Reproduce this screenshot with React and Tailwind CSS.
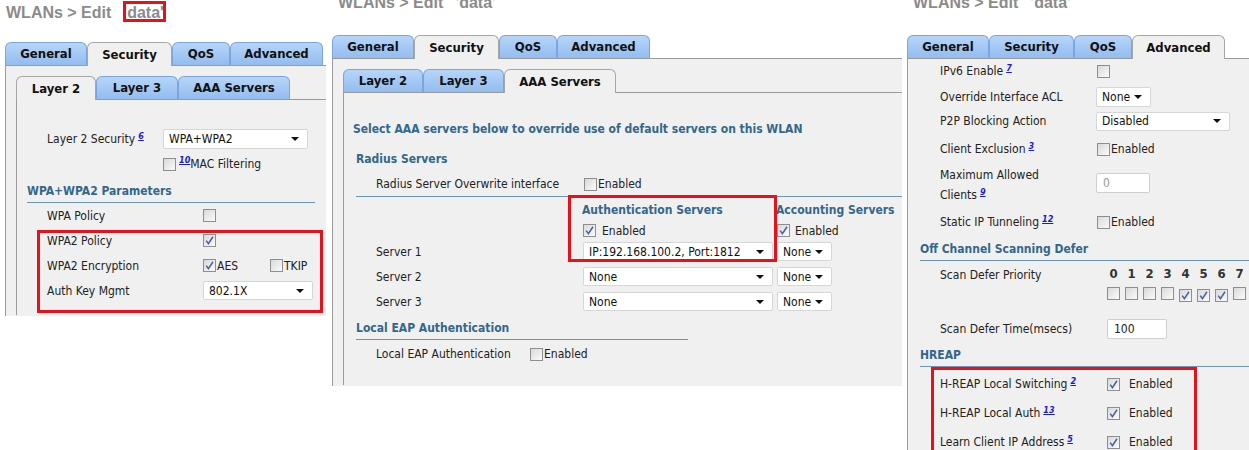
import React from 'react';

const FONT = { fontFamily: '"DejaVu Sans Condensed", "DejaVu Sans", sans-serif' };

const Box = ({ on }) => (
  <span className="inline-flex w-[13px] h-[13px] shrink-0 items-center justify-center border border-[#8e8e8e] bg-linear-to-br from-[#d9d9d9] to-[#fbfbfb]">
    {on && (
      <svg width="9" height="9" viewBox="0 0 9 9">
        <path d="M1.2 4.6 L3.4 7.6 L8 0.8" stroke="#4f62a3" strokeWidth="1.6" fill="none" />
      </svg>
    )}
  </span>
);

const Sel = ({ value, className }) => (
  <div className={`relative flex items-center bg-white border border-[#d6d6d6] rounded-[2px] pl-[5px] text-[12px] text-[#111] ${className}`}>
    <span className="whitespace-nowrap">{value}</span>
    <svg className="absolute right-[8px] top-1/2 -translate-y-1/2" width="8" height="4" viewBox="0 0 8 4">
      <path d="M0 0 H8 L4 4 Z" fill="#111" />
    </svg>
  </div>
);

const Field = ({ value, className }) => (
  <div className={`flex items-center bg-white border border-[#cfcfcf] rounded-[2px] pl-[6px] text-[12px] ${className}`}>{value}</div>
);

const Sup = ({ n }) => (
  <sup className="ml-[3px] text-[9px] font-bold italic text-[#1a1ad6] underline">{n}</sup>
);

const Title = ({ className = '' }) => (
  <div className="h-[42px] pl-[6px] text-[16px] font-bold text-[#8b8b8b] whitespace-nowrap" style={{ fontFamily: '"Liberation Sans", Arial, sans-serif' }}>
    <div className={`relative ${className}`}>
      WLANs &gt; Edit
      <span className="ml-[12px]">'data'</span>
    </div>
  </div>
);

function Tabs({ items, active }) {
  return (
    <div className="flex h-[24px]">
      {items.map(([label, w]) =>
        label === active ? (
          <div key={label} className={`${w} shrink-0 flex items-center justify-center rounded-t-[6px] border border-b-0 border-[#a6a6a6] bg-[#f0f0f0] text-[13px] font-bold text-[#111]`}>
            {label}
          </div>
        ) : (
          <div key={label} className={`${w} shrink-0 flex items-center justify-center rounded-t-[6px] border border-[#7ba5db] border-b-[#9a9a9a] bg-linear-to-b from-[#b7d5f9] to-[#93bcf0] text-[13px] font-bold text-[#111]`}>
            {label}
          </div>
        )
      )}
      <div className="flex-1 border-b border-[#9a9a9a]" />
    </div>
  );
}

const Head = ({ children, className }) => (
  <div className={`flex items-center h-[23px] border-b border-[#6b95b5] text-[12px] font-bold text-[#33678c] ${className}`}>{children}</div>
);

const Red = ({ className }) => <div className={`absolute border-[3px] border-[#e5121c] pointer-events-none ${className}`} />;

const top = [['General', 'w-[82px]'], ['Security', 'w-[85px]'], ['QoS', 'w-[58px]'], ['Advanced', 'w-[93px]']];
const inner1 = [['Layer 2', 'w-[80px]'], ['Layer 3', 'w-[82px]'], ['AAA Servers', 'w-[112px]']];
const inner2 = [['Layer 2', 'w-[80px]'], ['Layer 3', 'w-[81px]'], ['AAA Servers', 'w-[112px]']];

function PanelOne() {
  return (
    <div className="relative w-[331px] shrink-0">
      <Title className="top-[1px]" />
      <Red className="left-[123px] top-[1px] w-[43px] h-[21px]" />
      <div className="pl-[5px] pr-[5px]">
        <Tabs items={top} active="Security" />
        <div className="h-[250px] bg-[#f0f0f0] border-l border-[#9a9a9a] pt-[10px] pl-[10px]">
          <Tabs items={inner1} active="Layer 2" />
          <div className="relative h-[215px] overflow-hidden border-l border-[#9a9a9a] text-[12px] text-[#222]">
            <div className="h-[29px]" />
            <div className="flex items-center h-[20px] pl-[30px]">
              <div className="w-[116px]">Layer 2 Security<Sup n="6" /></div>
              <Sel value="WPA+WPA2" className="w-[145px] h-[20px]" />
            </div>
            <div className="flex items-center h-[20px] mt-[5px] pl-[146px]">
              <Box />
              <Sup n="10" />
              <span>MAC Filtering</span>
            </div>
            <Head className="mt-[6px] ml-[10px] w-[288px]">WPA+WPA2 Parameters</Head>
            <div className="flex items-center h-[25px] pl-[30px]">
              <div className="w-[156px]">WPA Policy</div>
              <Box />
            </div>
            <div className="flex items-center h-[25px] pl-[30px]">
              <div className="w-[156px]">WPA2 Policy</div>
              <Box on />
            </div>
            <div className="flex items-center h-[25px] pl-[30px]">
              <div className="w-[156px]">WPA2 Encryption</div>
              <div className="flex items-center w-[67px]"><Box on /><span className="ml-[1px]">AES</span></div>
              <Box /><span className="ml-[1px]">TKIP</span>
            </div>
            <div className="flex items-center h-[25px] pl-[30px]">
              <div className="w-[156px]">Auth Key Mgmt</div>
              <Sel value="802.1X" className="w-[110px] h-[19px]" />
            </div>
            <Red className="left-[20px] top-[130px] w-[286px] h-[83px]" />
          </div>
        </div>
      </div>
    </div>
  );
}

function PanelTwo() {
  return (
    <div className="relative w-[575px] shrink-0 -mt-[7px] pl-[1px]">
      <Title className="-top-[2px]" />
      <div className="w-[570px]">
        <Tabs items={top} active="Security" />
        <div className="h-[327px] bg-[#f0f0f0] border-l border-[#9a9a9a] pt-[10px] pl-[10px]">
          <Tabs items={inner2} active="AAA Servers" />
          <div className="relative h-[292px] border-l border-[#9a9a9a] text-[12px] text-[#222]">
            <div className="h-[26px]" />
            <div className="flex items-center h-[20px] pl-[9px] font-bold text-[#33678c]">
              Select AAA servers below to override use of default servers on this WLAN
            </div>
            <div className="flex items-center h-[20px] mt-[10px] pl-[12px] font-bold text-[#33678c]">Radius Servers</div>
            <div className="flex items-center h-[20px] mt-[5px] pl-[32px]">
              <div className="w-[208px]">Radius Server Overwrite interface</div>
              <Box /><span className="ml-[1px]">Enabled</span>
            </div>
            <div className="mt-[2px] ml-[12px] border-t border-[#6b95b5]" />
            <div className="flex items-center h-[20px] mt-[3px] pl-[238px] font-bold text-[#33678c] whitespace-nowrap">
              <div className="w-[194px]">Authentication Servers</div>
              <div>Accounting Servers</div>
            </div>
            <div className="flex items-center h-[21px] pl-[239px]">
              <div className="flex items-center w-[194px]"><Box on /><span className="ml-[6px]">Enabled</span></div>
              <Box on /><span className="ml-[5px]">Enabled</span>
            </div>
            {[
              ['Server 1', 'IP:192.168.100.2, Port:1812', ''],
              ['Server 2', 'None', 'mt-[4px]'],
              ['Server 3', 'None', 'mt-[4px]'],
            ].map(([l, v, m]) => (
              <div key={l} className={`flex items-center h-[21px] pl-[32px] ${m}`}>
                <div className="w-[207px]">{l}</div>
                <Sel value={v} className="w-[190px] h-[19px]" />
                <Sel value="None" className="w-[55px] h-[19px] ml-[4px]" />
              </div>
            ))}
            <Head className="mt-[5px] ml-[12px] w-[332px]">Local EAP Authentication</Head>
            <div className="flex items-center h-[20px] mt-[4px] pl-[32px]">
              <div className="w-[154px]">Local EAP Authentication</div>
              <Box /><span className="ml-[1px]">Enabled</span>
            </div>
            <Red className="left-[224px] top-[102px] w-[209px] h-[67px]" />
          </div>
        </div>
      </div>
    </div>
  );
}

function PanelThree() {
  const pri = [false, false, false, false, true, true, true, false];
  return (
    <div className="relative flex-1 -mt-[7px] pl-[1px]">
      <Title className="-top-[2px]" />
      <Tabs items={top} active="Advanced" />
      <div className="relative h-[420px] bg-[#f0f0f0] border-l border-[#9a9a9a] pt-[2px] text-[12px] text-[#222]">
        <div className="flex items-center h-[20px] pl-[32px]">
          <div className="w-[157px]">IPv6 Enable<Sup n="7" /></div>
          <Box />
        </div>
        <div className="flex items-center h-[20px] mt-[6px] pl-[32px]">
          <div className="w-[156px]">Override Interface ACL</div>
          <Sel value="None" className="w-[55px] h-[20px]" />
        </div>
        <div className="flex items-center h-[20px] mt-[4px] pl-[32px]">
          <div className="w-[156px]">P2P Blocking Action</div>
          <Sel value="Disabled" className="w-[134px] h-[19px]" />
        </div>
        <div className="flex items-center h-[20px] mt-[8px] pl-[32px]">
          <div className="w-[157px]">Client Exclusion<Sup n="3" /></div>
          <Box /><span className="ml-[1px]">Enabled</span>
        </div>
        <div className="flex items-start mt-[6px] pl-[32px]">
          <div className="w-[156px] leading-[20px]">Maximum Allowed<br />Clients<Sup n="9" /></div>
          <Field value={<span className="text-[#999]">0</span>} className="w-[54px] h-[20px] mt-[8px]" />
        </div>
        <div className="flex items-center h-[20px] mt-[7px] pl-[32px]">
          <div className="w-[157px]">Static IP Tunneling<Sup n="12" /></div>
          <Box /><span className="ml-[1px]">Enabled</span>
        </div>
        <Head className="mt-[6px] ml-[12px]">Off Channel Scanning Defer</Head>
        <div className="flex items-start mt-[4px] pl-[32px]">
          <div className="w-[167px] h-[20px] flex items-center">Scan Defer Priority</div>
          {pri.map((on, i) => (
            <div key={i} className="w-[18px] shrink-0 flex flex-col">
              <div className="w-[13px] h-[18px] flex items-center justify-center font-bold text-[13px] text-[#333]">{i}</div>
              <div className="mt-[4px]"><Box on={on} /></div>
            </div>
          ))}
        </div>
        <div className="flex items-center h-[20px] mt-[14px] pl-[32px]">
          <div className="w-[167px]">Scan Defer Time(msecs)</div>
          <Field value="100" className="w-[60px] h-[20px]" />
        </div>
        <Head className="mt-[5px] ml-[12px]">HREAP</Head>
        {[
          ['H-REAP Local Switching', '2', 'mt-[7px]'],
          ['H-REAP Local Auth', '13', 'mt-[9px]'],
          ['Learn Client IP Address', '5', 'mt-[9px]'],
        ].map(([l, n, m]) => (
          <div key={l} className={`flex items-center h-[20px] pl-[32px] ${m}`}>
            <div className="w-[167px]">{l}<Sup n={n} /></div>
            <Box on /><span className="ml-[9px]">Enabled</span>
          </div>
        ))}
        <Red className="left-[23px] top-[308px] w-[266px] h-[110px]" />
      </div>
    </div>
  );
}

export default function App() {
  return (
    <div className="w-[1249px] h-[450px] bg-white overflow-hidden flex items-start" style={FONT}>
      <PanelOne />
      <PanelTwo />
      <PanelThree />
    </div>
  );
}
